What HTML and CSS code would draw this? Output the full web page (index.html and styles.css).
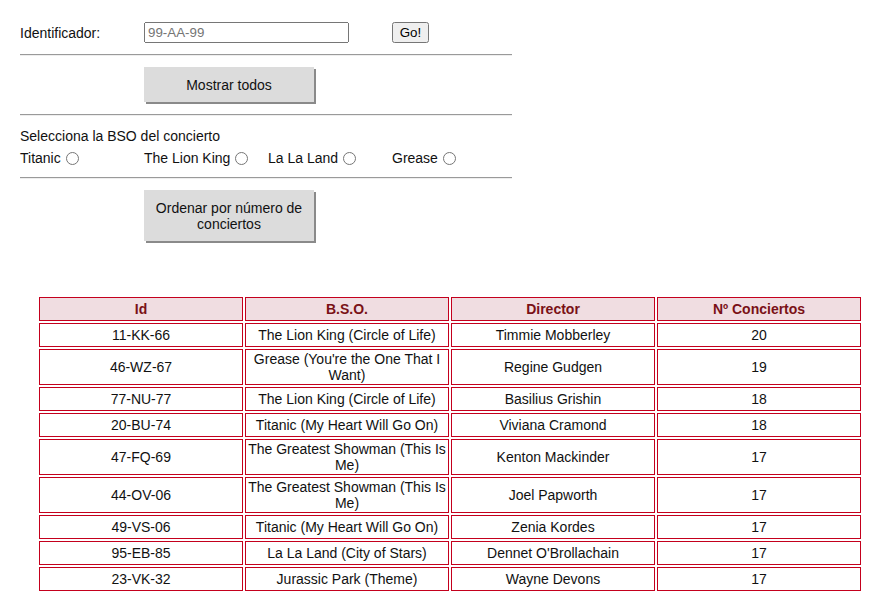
FILE: index.html
```html
<!DOCTYPE html>
<html lang="es">
<head>
<meta charset="utf-8">
<title>Conciertos</title>
<link rel="stylesheet" href="styles.css">
</head>
<body>
<div class="page">
  <div class="form">
    <div class="row row-id">
      <label class="lbl" for="ident">Identificador:</label>
      <input class="ident" id="ident" type="text" placeholder="99-AA-99">
      <button class="go">Go!</button>
    </div>
    <hr class="sep">
    <div class="row row-btn">
      <button class="big">Mostrar todos</button>
    </div>
    <hr class="sep sep-2">
    <p class="title">Selecciona la BSO del concierto</p>
    <div class="row radios">
      <label class="opt">Titanic<input type="radio" name="bso"></label>
      <label class="opt">The Lion King<input type="radio" name="bso"></label>
      <label class="opt">La La Land<input type="radio" name="bso"></label>
      <label class="opt">Grease<input type="radio" name="bso"></label>
    </div>
    <hr class="sep">
    <div class="row row-btn">
      <button class="big">Ordenar por número de conciertos</button>
    </div>
  </div>

  <table class="tabla">
    <thead>
      <tr><th>Id</th><th>B.S.O.</th><th>Director</th><th>Nº Conciertos</th></tr>
    </thead>
    <tbody>
      <tr><td>11-KK-66</td><td>The Lion King (Circle of Life)</td><td>Timmie Mobberley</td><td>20</td></tr>
      <tr><td>46-WZ-67</td><td>Grease (You're the One That I Want)</td><td>Regine Gudgen</td><td>19</td></tr>
      <tr><td>77-NU-77</td><td>The Lion King (Circle of Life)</td><td>Basilius Grishin</td><td>18</td></tr>
      <tr><td>20-BU-74</td><td>Titanic (My Heart Will Go On)</td><td>Viviana Cramond</td><td>18</td></tr>
      <tr><td>47-FQ-69</td><td>The Greatest Showman (This Is Me)</td><td>Kenton Mackinder</td><td>17</td></tr>
      <tr><td>44-OV-06</td><td>The Greatest Showman (This Is Me)</td><td>Joel Papworth</td><td>17</td></tr>
      <tr><td>49-VS-06</td><td>Titanic (My Heart Will Go On)</td><td>Zenia Kordes</td><td>17</td></tr>
      <tr><td>95-EB-85</td><td>La La Land (City of Stars)</td><td>Dennet O'Brollachain</td><td>17</td></tr>
      <tr><td>23-VK-32</td><td>Jurassic Park (Theme)</td><td>Wayne Devons</td><td>17</td></tr>
    </tbody>
  </table>
</div>
</body>
</html>
```

FILE: styles.css
```css
html, body {
  margin: 0;
  padding: 0;
  background: #fff;
}
body {
  font-family: "Liberation Sans", Arial, sans-serif;
  font-size: 14px;
  line-height: 16px;
  color: #111;
  overflow: hidden;
}
.page {
  padding: 22px 0 0 0;
}
.form {
  margin-left: 20px;
  width: 492px;
}
.row {
  display: grid;
  grid-template-columns: repeat(4, 124px);
  align-items: center;
}
.row-id {
  height: 21px;
}
.lbl {
  grid-column: 1;
}
.ident {
  grid-column: 2 / span 2;
  box-sizing: border-box;
  width: 205px;
  height: 21px;
  font-family: "Liberation Sans", Arial, sans-serif;
  font-size: 13.33px;
  margin: 0;
}
.go {
  grid-column: 4;
  justify-self: start;
  box-sizing: border-box;
  width: 37px;
  height: 21px;
  padding: 0;
  margin: 0;
  font-family: "Liberation Sans", Arial, sans-serif;
  font-size: 13.33px;
}
.sep {
  margin: 11px 0;
  border: 0;
  border-top: 1px solid #9a9a9a;
  border-bottom: 1px solid #eeeeee;
  height: 0;
}
.sep-2 {
  margin: 12px 0;
}
.row-btn {
  height: auto;
}
.big {
  grid-column: 2 / span 2;
  justify-self: start;
  box-sizing: border-box;
  width: 170px;
  margin: 0;
  padding: 9.5px 10px;
  border: 0;
  background: #dcdcdc;
  box-shadow: 2px 2px 0 #8a8a8a;
  font-family: "Liberation Sans", Arial, sans-serif;
  font-size: 14px;
  line-height: 16px;
  color: #111;
}
.title {
  margin: 0 0 6px 0;
}
.radios {
  height: 16px;
}
.opt {
  display: flex;
  align-items: center;
}
.opt input {
  margin: 1px 0 0 5px;
  width: 13px;
  height: 13px;
}
.tabla {
  margin: 54px 0 0 37px;
  width: 826px;
  border-spacing: 2px;
  table-layout: fixed;
}
.tabla tr {
  height: 24px;
}
.tabla th,
.tabla td {
  border: 1px solid #c4001d;
  padding: 1px;
  text-align: center;
  vertical-align: middle;
  line-height: 16px;
}
.tabla th {
  background: #f0dde1;
  color: #7a1116;
  font-weight: bold;
}
```
